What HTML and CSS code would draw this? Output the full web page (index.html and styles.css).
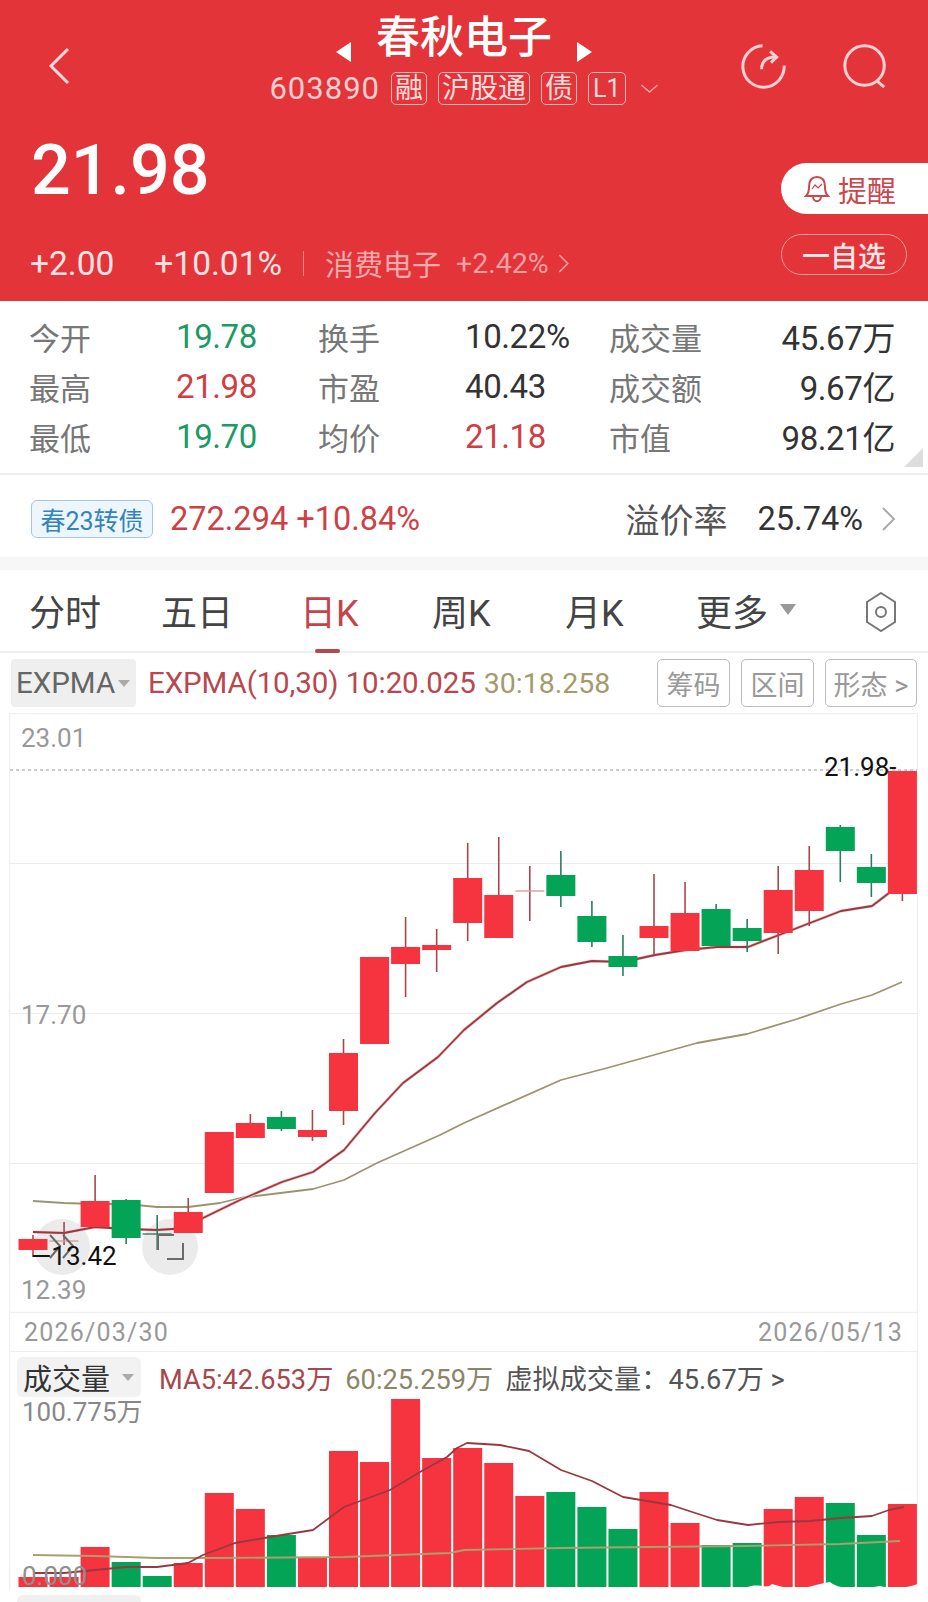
FILE: index.html
```html
<!DOCTYPE html>
<html>
<head>
  <meta charset="utf-8">
  <title>春秋电子</title>
  <link rel="stylesheet" href="styles.css">
</head>
<body>
  <div class="page">
    <header class="header">
      <div class="nav">
        <svg class="back" viewBox="0 0 22 38"><path d="M20 2 L3 19 L20 36"/></svg>
        <div class="name-box">
          <div class="name-row">
            <span class="tri-left"></span>
            <span class="name">春秋电子</span>
            <span class="tri-right"></span>
          </div>
          <div class="code-row">
            <span class="code">603890</span>
            <span class="tag">融</span>
            <span class="tag">沪股通</span>
            <span class="tag">债</span>
            <span class="tag tag-en">L1</span>
            <svg class="down" viewBox="0 0 20 10"><path d="M1 1 L10 9 L19 1"/></svg>
          </div>
        </div>
        <div class="nav-icons">
          <svg class="nav-icon" viewBox="0 0 50 50">
            <path d="M24 3 A22 22 0 1 0 47 24"/>
            <path d="M23 28 C23 19 28 15 38 15"/>
            <path d="M32 9 L39 15 L33 21"/>
          </svg>
          <svg class="nav-icon" viewBox="0 0 50 50">
            <circle cx="24" cy="24" r="21"/>
            <path d="M38 41 L45 47"/>
          </svg>
        </div>
      </div>
      <div class="quote">
        <div>
          <div class="price">21.98</div>
          <div class="change-row">
            <span class="change">+2.00</span>
            <span class="change">+10.01%</span>
            <span class="sep"></span>
            <span class="sector">消费电子</span>
            <span class="sector-pct">+2.42%</span>
            <svg class="sector-arrow" viewBox="0 0 10 18"><path d="M1 1 L9 9 L1 17"/></svg>
          </div>
        </div>
        <div class="quote-btns">
          <div class="remind">
            <svg class="bell" viewBox="0 0 26 28">
              <path d="M13 2 C7 2 5 7 5 12 C5 17 4 19 2 21 L24 21 C22 19 21 17 21 12 C21 7 19 2 13 2 Z"/>
              <path d="M9 21 C9 28 17 28 17 21"/>
              <path class="bell-line" d="M8 14 L11 10 L14 13 L18 9"/>
            </svg>
            提醒
          </div>
          <div class="watch">一自选</div>
        </div>
      </div>
    </header>

    <section class="stats">
      <span class="label">今开</span><span class="val green">19.78</span>
      <span class="label">换手</span><span class="val">10.22%</span>
      <span class="label">成交量</span><span class="val right">45.67万</span>
      <span class="label">最高</span><span class="val red">21.98</span>
      <span class="label">市盈</span><span class="val">40.43</span>
      <span class="label">成交额</span><span class="val right">9.67亿</span>
      <span class="label">最低</span><span class="val green">19.70</span>
      <span class="label">均价</span><span class="val red">21.18</span>
      <span class="label">市值</span><span class="val right">98.21亿</span>
      <span class="corner"></span>
    </section>

    <section class="bond">
      <span class="bond-tag">春23转债</span>
      <span class="bond-val">272.294 +10.84%</span>
      <span class="premium-label">溢价率</span>
      <span class="premium-val">25.74%</span>
      <svg class="bond-arrow" viewBox="0 0 14 24"><path d="M1 1 L12 12 L1 23"/></svg>
    </section>

    <nav class="tabs">
      <span class="tab">分时</span>
      <span class="tab">五日</span>
      <span class="tab active">日K</span>
      <span class="tab">周K</span>
      <span class="tab">月K</span>
      <span class="tab">更多<i class="tab-tri"></i></span>
      <svg class="hex" viewBox="0 0 36 40">
        <path d="M18 1 L32 10 L32 30 L18 39 L4 30 L4 10 Z"/>
        <circle cx="18" cy="20" r="5"/>
      </svg>
    </nav>

    <div class="legend">
      <div class="picker">EXPMA<i class="picker-tri"></i></div>
      <span class="ma-red">EXPMA(10,30) 10:20.025</span>
      <span class="ma-tan">30:18.258</span>
      <div class="legend-btns">
        <span class="legend-btn">筹码</span>
        <span class="legend-btn">区间</span>
        <span class="legend-btn">形态 &gt;</span>
      </div>
    </div>

    <section class="chart">
      <svg id="kline" class="chart-svg" viewBox="9 713 909 600"></svg>
      <span class="axis axis-top">23.01</span>
      <span class="axis axis-mid">17.70</span>
      <span class="axis axis-low">12.39</span>
      <span class="mark mark-high">21.98-</span>
      <span class="mark mark-low">—13.42</span>
    </section>

    <div class="dates">
      <span>2026/03/30</span>
      <span>2026/05/13</span>
    </div>

    <section class="volume">
      <div class="vol-head">
        <div class="vol-picker">成交量<i class="picker-tri"></i></div>
        <span class="vol-ma5">MA5:42.653万</span>
        <span class="vol-ma60">60:25.259万</span>
        <span class="vol-virtual">虚拟成交量：45.67万 &gt;</span>
      </div>
      <span class="vol-max">100.775万</span>
      <span class="vol-min">0.000</span>
      <svg id="bars" class="vol-svg" viewBox="9 1352 909 250"></svg>
    </section>
  </div>
  <script src="chart.js"></script>
</body>
</html>
```

FILE: styles.css
```css
* {
  box-sizing: border-box;
}

html, body {
  margin: 0;
  padding: 0;
  background: #fff;
  overflow: hidden;
}

body {
  font-family: Roboto, "Noto Sans CJK SC", sans-serif;
}

.page {
  width: 928px;
  height: 1602px;
  overflow: hidden;
}

svg path, svg circle {
  fill: none;
}

/* header */
.header {
  height: 301px;
  background: #e3343a;
  color: #fff;
  padding-top: 16px;
}

.nav {
  display: grid;
  grid-template-columns: 186px 1fr 186px;
  height: 92px;
}

.back {
  width: 22px;
  height: 38px;
  margin: 31px 0 0 48px;
  stroke: #fbdcdc;
  stroke-width: 3;
}

.name-box {
  display: flex;
  flex-direction: column;
  align-items: center;
}

.name-row {
  display: flex;
  align-items: center;
  height: 44px;
}

.name {
  font-size: 44px;
  line-height: 44px;
  font-weight: 500;
  margin: 0 25px 0 25px;
  color: #fff;
}

.tri-left, .tri-right {
  width: 0;
  height: 0;
  margin-top: 28px;
  border-top: 10px solid transparent;
  border-bottom: 10px solid transparent;
}

.tri-left {
  border-right: 15px solid #fff;
}

.tri-right {
  border-left: 15px solid #fff;
}

.code-row {
  display: flex;
  align-items: center;
  height: 33px;
  margin-top: 12px;
  color: #f8cfcf;
}

.code {
  font-size: 31px;
  letter-spacing: 1px;
  margin-right: 11px;
}

.tag {
  display: flex;
  align-items: center;
  justify-content: center;
  height: 33px;
  padding: 0 3px;
  margin-right: 11px;
  border: 1.5px solid #f6b5b6;
  border-radius: 5px;
  font-size: 28px;
  line-height: 1;
  color: #fbdcdc;
}

.tag-en {
  font-size: 25px;
  padding: 0 4px;
  margin-right: 14px;
}

.down {
  width: 19px;
  height: 9px;
  stroke: #f3a6a8;
  stroke-width: 1.5;
}

.nav-icons {
  display: flex;
  gap: 55px;
  padding: 27px 0 0 0;
  margin-left: -2px;
}

.nav-icon {
  width: 47px;
  height: 47px;
  stroke: #fbd0d0;
  stroke-width: 3.2;
}

.quote {
  display: flex;
  justify-content: space-between;
  margin-top: 24px;
  padding-left: 31px;
}

.price {
  font-size: 70px;
  line-height: 72px;
  font-weight: 500;
  height: 72px;
  margin-top: 2px;
}

.change-row {
  display: flex;
  align-items: center;
  height: 32px;
  margin-top: 41px;
  margin-left: -1px;
}

.change {
  font-size: 33.5px;
  margin-right: 40px;
  color: #fbe4e4;
}

.change + .change {
  margin-right: 21px;
}

.sep {
  width: 1px;
  height: 25px;
  background: #f0888a;
  margin-right: 21px;
}

.sector {
  font-size: 29px;
  color: #f6a9aa;
  margin-right: 15px;
}

.sector-pct {
  font-size: 28.5px;
  color: #f3a0a2;
  margin-right: 9px;
}

.sector-arrow {
  width: 11px;
  height: 19px;
  stroke: #f3a0a2;
  stroke-width: 1.5;
}

.quote-btns {
  display: flex;
  flex-direction: column;
  align-items: flex-end;
  width: 147px;
  margin-top: 31px;
}

.remind {
  display: flex;
  align-items: center;
  width: 147px;
  height: 51px;
  padding-left: 23px;
  background: #fff;
  border-radius: 26px 0 0 26px;
  font-size: 29px;
  color: #c9474d;
}

.bell {
  width: 26px;
  height: 28px;
  margin-right: 8px;
  stroke: #c9474d;
  stroke-width: 2;
}

.bell-line {
  stroke-width: 1.2;
}

.watch {
  display: flex;
  align-items: center;
  justify-content: center;
  width: 126px;
  height: 41px;
  margin: 20px 21px 0 0;
  border: 1.5px solid #f09a9b;
  border-radius: 21px;
  font-size: 28px;
  font-weight: 500;
  color: #fde6e6;
}

/* stats */
.stats {
  position: relative;
  display: grid;
  grid-template-columns: 145px 144px 145px 146px 130px 156px;
  grid-auto-rows: 50px;
  align-items: center;
  height: 174px;
  padding: 10px 31px 0 29px;
  border-bottom: 2px solid #ececec;
}

.label {
  font-size: 31px;
  color: #777;
}

.val {
  font-size: 33px;
  letter-spacing: -0.4px;
  color: #333;
  padding-left: 2px;
}

.val.green {
  color: #1b9a66;
}

.val.red {
  color: #cf3d45;
}

.val.right {
  text-align: right;
}

.corner {
  position: absolute;
  right: 5px;
  bottom: 6px;
  width: 0;
  height: 0;
  border-left: 19px solid transparent;
  border-bottom: 19px solid #ddd;
}

/* bond */
.bond {
  display: flex;
  align-items: center;
  height: 95px;
  padding: 5px 0 0 31px;
  border-bottom: 13px solid #f7f7f7;
}

.bond-tag {
  display: flex;
  align-items: center;
  justify-content: center;
  width: 122px;
  height: 38px;
  background: #edf6fc;
  border: 1.5px solid #a9c6dc;
  border-radius: 6px;
  font-size: 25px;
  color: #3583bd;
  margin-right: 17px;
}

.bond-val {
  font-size: 32.5px;
  color: #cf4046;
  flex: 1;
}

.premium-label {
  font-size: 34px;
  color: #555;
  margin-right: 30px;
}

.premium-val {
  font-size: 32.5px;
  color: #333;
  margin-right: 19px;
}

.bond-arrow {
  width: 14px;
  height: 24px;
  margin-right: 32px;
  stroke: #aaa;
  stroke-width: 2;
}

/* tabs */
.tabs {
  display: grid;
  grid-template-columns: 132px 139px 132px 133px 131px 167px 36px;
  align-items: center;
  height: 83px;
  padding: 0 0 0 29px;
  border-bottom: 2px solid #eee;
}

.tab {
  position: relative;
  font-size: 36px;
  color: #444;
  display: flex;
  align-items: center;
  height: 83px;
  padding-bottom: 4px;
}

.tab.active {
  color: #c4444c;
}

.tab.active::after {
  content: "";
  position: absolute;
  left: 15px;
  bottom: 0;
  width: 25px;
  height: 4px;
  border-radius: 2px;
  background: #b5474d;
}

.tab-tri {
  width: 0;
  height: 0;
  margin-left: 12px;
  border-left: 8px solid transparent;
  border-right: 8px solid transparent;
  border-top: 11px solid #999;
}

.hex {
  width: 36px;
  height: 40px;
  stroke: #777;
  stroke-width: 2;
}

/* legend row */
.legend {
  display: flex;
  align-items: center;
  height: 60px;
  padding: 6px 11px 6px 11px;
  font-size: 29.5px;
}

.picker {
  display: flex;
  align-items: center;
  width: 125px;
  height: 48px;
  padding-left: 5px;
  background: #efefef;
  border-radius: 4px;
  color: #666;
  margin-right: 12px;
}

.picker-tri {
  width: 0;
  height: 0;
  margin-left: 3px;
  border-left: 6px solid transparent;
  border-right: 6px solid transparent;
  border-top: 7px solid #aaa;
}

.ma-red {
  color: #b8474e;
  margin-right: 8px;
  letter-spacing: -0.1px;
}

.ma-tan {
  color: #a59a6c;
  font-size: 28.5px;
}

.legend-btns {
  display: flex;
  gap: 11px;
  margin-left: auto;
}

.legend-btn {
  display: flex;
  align-items: center;
  justify-content: center;
  height: 48px;
  padding: 0 6px;
  min-width: 73px;
  border: 1.5px solid #bbb;
  border-radius: 5px;
  font-size: 27px;
  color: #999;
}

.legend-btn:last-child {
  min-width: 92px;
}

/* k line chart */
.chart {
  position: relative;
  width: 909px;
  height: 600px;
  margin-left: 9px;
}

.chart-svg {
  display: block;
  width: 909px;
  height: 600px;
}

.axis, .mark {
  position: absolute;
  font-size: 26px;
  line-height: 26px;
}

.axis {
  left: 12px;
  color: #999;
}

.axis-top {
  top: 12px;
}

.axis-mid {
  top: 289px;
}

.axis-low {
  top: 564px;
}

.mark {
  color: #111;
}

.mark-high {
  left: 815px;
  top: 41px;
}

.mark-low {
  left: 22px;
  top: 530px;
}

.dates {
  display: flex;
  justify-content: space-between;
  align-items: center;
  width: 909px;
  height: 39px;
  margin-left: 9px;
  padding: 0 14px 0 14px;
  font-size: 25px;
  letter-spacing: 1.2px;
  color: #999;
  border-right: 1px solid #f0f0f0;
  border-left: 1px solid #f0f0f0;
  border-bottom: 1px solid #eee;
}

/* volume */
.volume {
  position: relative;
  width: 909px;
  height: 250px;
  margin-left: 9px;
}

.vol-head {
  position: absolute;
  z-index: 1;
  display: flex;
  align-items: center;
  left: 8px;
  top: 5px;
  height: 40px;
  font-size: 27.2px;
}

.vol-picker {
  display: flex;
  align-items: center;
  width: 124px;
  height: 40px;
  padding-left: 6px;
  background: #f2f2f2;
  border-radius: 6px;
  font-size: 29px;
  color: #333;
  margin-right: 18px;
}

.vol-picker .picker-tri {
  margin-left: 12px;
}

.vol-ma5 {
  color: #a8474c;
  margin-right: 12px;
}

.vol-ma60 {
  color: #8c8668;
  margin-right: 12px;
}

.vol-virtual {
  color: #555;
}

.vol-max, .vol-min {
  position: absolute;
  left: 13px;
  z-index: 1;
  font-size: 26px;
  line-height: 26px;
  color: #888;
}

.vol-max {
  top: 47px;
}

.vol-min {
  top: 211px;
  color: #8f8f8f;
}

.vol-svg {
  display: block;
  width: 909px;
  height: 250px;
}
```

FILE: chart.js
```js
// x of the first candle, distance between candles, body width
const X0 = 33;
const STEP = 31.05;
const W = 29;

const RED = '#f6343f';
const GREEN = '#03a455';
const RED_WICK = '#a9464c';
const GREEN_WICK = '#2c7d5c';

// [up, bodyTop, bodyBottom, wickTop, wickBottom]
const candles = [
  [1, 1239, 1250, 1235, 1257],
  [1, 1241, 1242, 1222, 1245],
  [1, 1201, 1227, 1175, 1227],
  [0, 1200, 1238, 1199, 1244],
  [0, 1234, 1235, 1215, 1250],
  [1, 1212, 1233, 1198, 1233],
  [1, 1132, 1193, 1132, 1193],
  [1, 1123, 1138, 1114, 1138],
  [0, 1117, 1129, 1111, 1131],
  [1, 1130, 1137, 1110, 1141],
  [1, 1053, 1111, 1039, 1125],
  [1, 957, 1044, 957, 1044],
  [1, 947, 964, 917, 997],
  [1, 945, 950, 929, 972],
  [1, 878, 923, 843, 941],
  [1, 895, 938, 837, 938],
  [1, 891, 892, 866, 921],
  [0, 875, 896, 851, 907],
  [0, 916, 942, 901, 947],
  [0, 956, 967, 935, 976],
  [1, 926, 938, 874, 955],
  [1, 913, 951, 882, 951],
  [0, 909, 946, 904, 946],
  [0, 928, 941, 919, 952],
  [1, 890, 933, 866, 954],
  [1, 870, 911, 846, 926],
  [0, 827, 851, 825, 882],
  [0, 867, 883, 854, 897],
  [1, 771, 894, 771, 901]
];

const ema10 = [[33,1232],[64,1233],[95,1227],[126,1229],[157,1230],[188,1228],[203,1218],[240,1200],[282,1182],[313,1172],[344,1150],[375,1113],[403,1083],[438,1057],[464,1030],[497,1003],[527,982],[561,967],[592,961],[623,962],[655,955],[686,950],[717,947],[748,947],[779,935],[810,923],[841,911],[872,906],[889,893]];
const ema30 = [[33,1201],[64,1203],[95,1204],[126,1204],[157,1207],[188,1207],[220,1203],[240,1198],[313,1189],[344,1180],[377,1163],[440,1135],[464,1123],[561,1080],[607,1068],[661,1053],[697,1043],[747,1034],[797,1019],[841,1004],[872,995],[902,982]];

const volTops = [1577,1577,1547,1562,1576,1563,1493,1509,1535,1557,1451,1462,1399,1458,1448,1463,1496,1492,1507,1529,1492,1523,1545,1543,1509,1497,1503,1535,1504];
const volBase = 1587;
const ma5 = [[33,1573],[64,1573],[95,1570],[126,1567],[157,1567],[188,1563],[203,1555],[235,1543],[282,1535],[313,1530],[344,1507],[390,1490],[420,1472],[447,1457],[457,1448],[467,1443],[500,1445],[529,1451],[561,1470],[592,1481],[623,1497],[641,1500],[671,1505],[686,1510],[717,1520],[748,1525],[779,1522],[810,1521],[841,1518],[872,1516],[889,1510],[904,1507]];
const ma60 = [[33,1555],[95,1556],[157,1558],[220,1558],[344,1557],[450,1553],[464,1550],[560,1548],[650,1547],[745,1546],[840,1544],[900,1541]];

function add(svg, tag, attrs) {
  const el = document.createElementNS('http://www.w3.org/2000/svg', tag);
  Object.keys(attrs).forEach((k) => el.setAttribute(k, attrs[k]));
  svg.appendChild(el);
  return el;
}

function line(svg, pts, color, width) {
  add(svg, 'polyline', {
    points: pts.map((p) => p.join(',')).join(' '),
    fill: 'none',
    stroke: color,
    'stroke-width': width,
    'stroke-linejoin': 'round'
  });
}

function drawKline() {
  const svg = document.getElementById('kline');

  // frame and grid
  add(svg, 'rect', { x: 9.5, y: 713.5, width: 908, height: 599, fill: 'none', stroke: '#f0f0f0', 'stroke-width': 1.5 });
  [863.5, 1013.5, 1163.5].forEach((y) => {
    add(svg, 'line', { x1: 10, x2: 917, y1: y, y2: y, stroke: '#ececec' });
  });
  add(svg, 'line', { x1: 10, x2: 917, y1: 770, y2: 770, stroke: '#999', 'stroke-dasharray': '3 3' });

  // the two round overlay buttons sit under the candles
  add(svg, 'circle', { cx: 62, cy: 1247, r: 28, style: 'fill:#ebebeb' });
  add(svg, 'circle', { cx: 170, cy: 1247, r: 28, style: 'fill:#ebebeb' });

  line(svg, ema30, '#9c9470', 1.8);
  line(svg, ema10, '#f3c5c7', 3.2);
  line(svg, ema10, '#98393f', 1.8);

  candles.forEach((c, i) => {
    const x = X0 + i * STEP;
    const h = c[2] - c[1];
    add(svg, 'line', { x1: x, x2: x, y1: c[3], y2: c[4], stroke: c[0] ? RED_WICK : GREEN_WICK, 'stroke-width': 1.6 });
    if (h <= 1) {
      add(svg, 'line', { x1: x - W / 2, x2: x + W / 2, y1: c[1], y2: c[1], stroke: c[0] ? '#d9a0a3' : GREEN_WICK, 'stroke-width': 1.4 });
    } else {
      add(svg, 'rect', { x: x - W / 2, y: c[1], width: W, height: h, fill: c[0] ? RED : GREEN });
    }
  });

  // button glyphs
  const glyph = { fill: 'none', stroke: '#6b6b6b', 'stroke-width': 2 };
  add(svg, 'path', Object.assign({ d: 'M50 1235 L60 1246 L50 1258 M63 1235 L73 1246 L63 1258' }, glyph));
  add(svg, 'path', Object.assign({ d: 'M158 1250 L158 1235 L174 1235 M183 1243 L183 1259 L167 1259' }, glyph));
}

function drawVolume() {
  const svg = document.getElementById('bars');

  add(svg, 'line', { x1: 9.5, x2: 9.5, y1: 1352, y2: 1590, stroke: '#f0f0f0', 'stroke-width': 1.5 });
  add(svg, 'line', { x1: 917.5, x2: 917.5, y1: 1352, y2: 1590, stroke: '#f0f0f0', 'stroke-width': 1.5 });

  volTops.forEach((top, i) => {
    add(svg, 'rect', {
      x: X0 + i * STEP - W / 2,
      y: top,
      width: W,
      height: volBase - top,
      fill: candles[i][0] ? RED : GREEN
    });
  });

  line(svg, ma60, '#a8a070', 1.8);
  line(svg, ma5, '#98393f', 1.8);

  // faded watermark along the bottom right corner
  add(svg, 'path', {
    d: 'M745 1588 C760 1582 765 1590 772 1584 L790 1589 C805 1590 815 1584 830 1582 C840 1590 860 1590 880 1586 C895 1590 905 1588 918 1584 L918 1596 L745 1596 Z',
    style: 'fill:#fff'
  });

  // top of the next panel's selector, cut by the page edge
  add(svg, 'rect', { x: 17, y: 1595, width: 124, height: 12, rx: 6, fill: '#f0f0f0' });
}

drawKline();
drawVolume();
```
